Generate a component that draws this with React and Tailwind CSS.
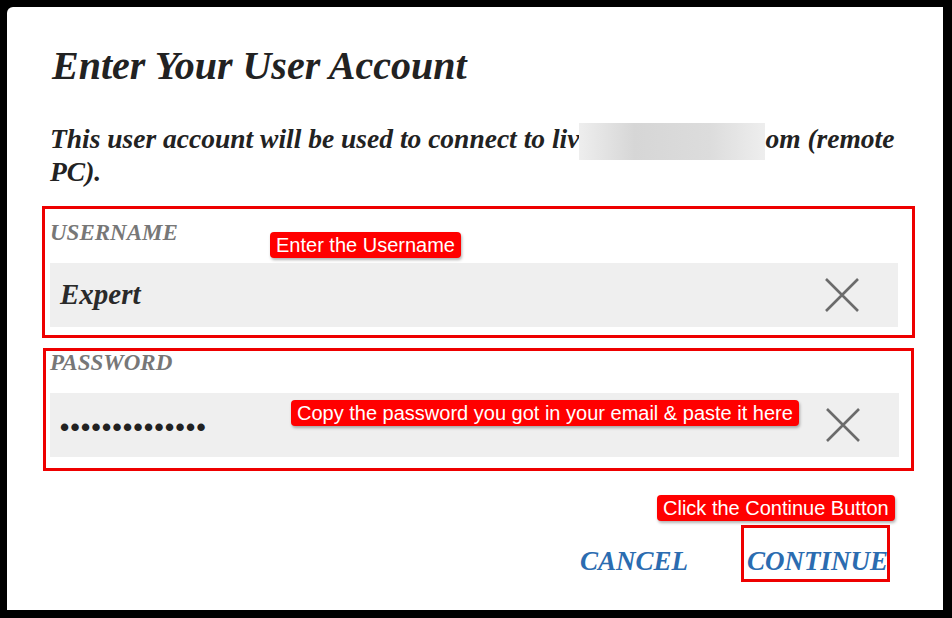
import { useState } from 'react';

const SERIF = { fontFamily: '"Liberation Serif", "Times New Roman", serif' };
const SANS = { fontFamily: '"Liberation Sans", Arial, sans-serif' };

function ClearIcon() {
  return (
    <svg width="36" height="36" viewBox="0 0 36 36" className="shrink-0">
      <path d="M2 2 L34 34 M34 2 L2 34" stroke="#6b6b6b" strokeWidth="2.6" fill="none" />
    </svg>
  );
}

function Callout({ children, className }) {
  return (
    <div
      className={`absolute rounded-[4px] bg-[#ff0000] px-[6px] leading-[26px] text-[20px] not-italic font-normal text-white whitespace-nowrap shadow-[1px_2px_3px_rgba(0,0,0,0.3)] ${className}`}
      style={SANS}
    >
      {children}
    </div>
  );
}

export default function App() {
  const [user] = useState('Expert');
  return (
    <div className="w-[952px] h-[618px] bg-black pt-[7px] pl-[7px] pr-[9px] pb-[8px]">
      <div className="relative h-full bg-white rounded-tl-[6px] pl-[35px] pr-[28px] italic font-bold" style={SERIF}>
        <h1 className="pt-[37px] pl-[10px] text-[40px] leading-[44px] text-[#222]">Enter Your User Account</h1>

        <p className="mt-[34px] pl-[8px] text-[27.5px] leading-[33px] text-[#222] w-[858px]">
          This user account will be used to connect to liv
          <span className="inline-block align-middle w-[186px] h-[37px] -my-[6px] bg-[linear-gradient(90deg,#eee,#d6d6d6_30%,#dcdcdc_70%,#eee)]" />
          om (remote PC).
        </p>

        <div className="mt-[18px] border-[3px] border-[#ee0000] pl-[5px] pr-[14px] pb-[8px] w-[873px]">
          <div className="pt-[12px] h-[54px] text-[23px] leading-[23px] text-[#777]">USERNAME</div>
          <div className="h-[64px] bg-[#efefef] flex items-center justify-between pl-[10px] pr-[38px]">
            <span className="text-[29px] text-[#2a2a2a]">{user}</span>
            <ClearIcon />
          </div>
        </div>

        <div className="mt-[10px] ml-[1px] border-[3px] border-[#ee0000] pl-[4px] pr-[12px] pb-[11px] w-[871px]">
          <div className="h-[42px] text-[23px] leading-[23px] text-[#777]">PASSWORD</div>
          <div className="h-[64px] bg-[#efefef] flex items-center justify-between pl-[10px] pr-[38px]">
            <span className="text-[26px] tracking-[1.4px] not-italic text-[#222] pt-[4px]" style={SANS}>
              ••••••••••••••
            </span>
            <ClearIcon />
          </div>
        </div>

        <div className="mt-[54px] flex justify-end items-end gap-[53px] pr-[25px]">
          <button className="italic font-bold text-[27px] text-[#2b6cb0] leading-[31px] mb-[5px]">CANCEL</button>
          <div className="border-[3px] border-[#ee0000] h-[57px] w-[149px] flex items-end pl-[3px] pb-[2px]">
            <button className="italic font-bold text-[27px] text-[#2b6cb0] leading-[31px] whitespace-nowrap">CONTINUE</button>
          </div>
        </div>

        <Callout className="left-[263px] top-[225px]">Enter the Username</Callout>
        <Callout className="left-[284px] top-[393px]">Copy the password you got in your email &amp; paste it here</Callout>
        <Callout className="left-[650px] top-[488px]">Click the Continue Button</Callout>
      </div>
    </div>
  );
}
